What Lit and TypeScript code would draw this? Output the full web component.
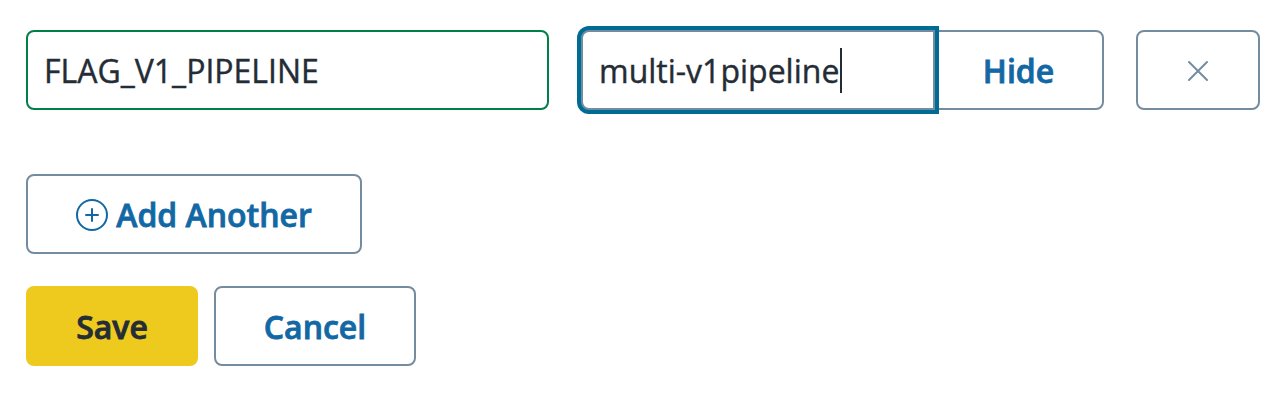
import { LitElement, html, css } from "lit";
import { customElement } from "lit/decorators.js";

@customElement("app-root")
export class AppRoot extends LitElement {
  static styles = css`
    :host { display: block; height: 402px; background: #fff; box-sizing: border-box; padding: 30px 20px 0 26px; font: 32px/44px "Open Sans", sans-serif; color: #242c35; overflow: hidden; }
    * { box-sizing: border-box; }
    .row { display: flex; }
    .box { height: 80px; border: 2px solid #748c9f; border-radius: 8px; background: #fff; display: flex; align-items: center; white-space: pre; padding: 2px 0 0; }
    .box span { -webkit-text-stroke: 0.4px currentColor; }
    .name { width: 523px; border-color: #007f47; padding-left: 16px; margin-right: 32px; }
    .value { width: 354px; border-radius: 8px 0 0 8px; padding: 0 0 0 16px; box-shadow: 0 0 0 4px #006b94; z-index: 1; }
    .value span { padding-top: 2px; }
    .caret { width: 2px; height: 45px; background: #242c35; margin-left: 1px; }
    .btn { justify-content: center; font-weight: 600; color: #1268a4; font-family: inherit; font-size: 32px; line-height: 44px; }
    .btn span { -webkit-text-stroke-width: 0.8px; }
    .hide { width: 171px; border-radius: 0 8px 8px 0; margin-left: -2px; }
    .remove { width: 124px; margin-left: 32px; }
    .add { width: 336px; margin-top: 64px; gap: 8px; }
    .actions { margin-top: 32px; gap: 16px; }
    .save { width: 172px; background: #eeca1f; border-color: #eeca1f; color: #242c35; }
    .cancel { width: 202px; }
    svg { display: block; fill: none; stroke-linecap: round; }
  `;

  render() {
    return html`
      <div class="row">
        <div class="box name"><span>FLAG_V1_PIPELINE</span></div>
        <div class="box value"><span>multi-v1pipeline</span><i class="caret"></i></div>
        <button class="box btn hide"><span>Hide</span></button>
        <button class="box btn remove" aria-label="Remove">
          <svg width="22" height="22" viewBox="0 0 22 22" stroke="#748c9f" stroke-width="2"><path d="M2 2L20 20M20 2L2 20" /></svg>
        </button>
      </div>
      <button class="box btn add">
        <svg width="32" height="32" viewBox="0 0 32 32" stroke="#1268a4" stroke-width="2"><circle cx="16" cy="16" r="15" /><path d="M10 16H22M16 10V22" /></svg><span>Add Another</span>
      </button>
      <div class="row actions">
        <button class="box btn save"><span>Save</span></button>
        <button class="box btn cancel"><span>Cancel</span></button>
      </div>
    `;
  }
}
